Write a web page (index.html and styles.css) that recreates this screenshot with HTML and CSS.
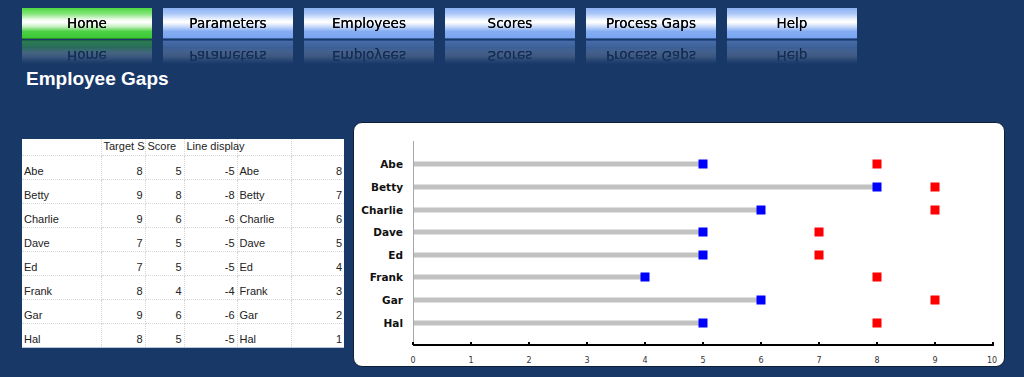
FILE: index.html
```html
<!DOCTYPE html>
<html lang="en">
<head>
<meta charset="UTF-8">
<title>Employee Gaps</title>
<link rel="stylesheet" href="styles.css">
</head>
<body>
<div class="page">

<!-- Top navigation -->
<nav class="nav">
    <a class="nav-btn active" href="#">Home</a>
    <a class="nav-btn" href="#">Parameters</a>
    <a class="nav-btn" href="#">Employees</a>
    <a class="nav-btn" href="#">Scores</a>
    <a class="nav-btn" href="#">Process Gaps</a>
    <a class="nav-btn" href="#">Help</a>
</nav>

<h1 class="title">Employee Gaps</h1>

<div class="content">
    <!-- Data sheet -->
    <table class="sheet">
        <colgroup>
            <col class="c1"><col class="c2"><col class="c3"><col class="c4"><col class="c5"><col class="c6">
        </colgroup>
        <tr class="head">
            <td></td><td class="clip">Target Score</td><td>Score</td><td class="spill">Line display</td><td></td><td></td>
        </tr>
        <tr><td>Abe</td><td class="num">8</td><td class="num">5</td><td class="num">-5</td><td>Abe</td><td class="num">8</td></tr>
        <tr><td>Betty</td><td class="num">9</td><td class="num">8</td><td class="num">-8</td><td>Betty</td><td class="num">7</td></tr>
        <tr><td>Charlie</td><td class="num">9</td><td class="num">6</td><td class="num">-6</td><td>Charlie</td><td class="num">6</td></tr>
        <tr><td>Dave</td><td class="num">7</td><td class="num">5</td><td class="num">-5</td><td>Dave</td><td class="num">5</td></tr>
        <tr><td>Ed</td><td class="num">7</td><td class="num">5</td><td class="num">-5</td><td>Ed</td><td class="num">4</td></tr>
        <tr><td>Frank</td><td class="num">8</td><td class="num">4</td><td class="num">-4</td><td>Frank</td><td class="num">3</td></tr>
        <tr><td>Gar</td><td class="num">9</td><td class="num">6</td><td class="num">-6</td><td>Gar</td><td class="num">2</td></tr>
        <tr><td>Hal</td><td class="num">8</td><td class="num">5</td><td class="num">-5</td><td>Hal</td><td class="num">1</td></tr>
    </table>

    <!-- Gap chart -->
    <div class="chart">
        <svg width="650" height="243" viewBox="0 0 650 243">
            <line x1="59.5" y1="18" x2="59.5" y2="222" stroke="#a8a8a8" stroke-width="1"/>

            <g class="labels">
                <text x="49" y="45">Abe</text>
                <text x="49" y="68">Betty</text>
                <text x="49" y="91">Charlie</text>
                <text x="49" y="113">Dave</text>
                <text x="49" y="136">Ed</text>
                <text x="49" y="158">Frank</text>
                <text x="49" y="181">Gar</text>
                <text x="49" y="204">Hal</text>
            </g>

            <g fill="#c2c2c2">
                <rect x="60" y="38.5" width="289" height="5"/>
                <rect x="60" y="61.5" width="463" height="5"/>
                <rect x="60" y="84.5" width="347" height="5"/>
                <rect x="60" y="106.5" width="289" height="5"/>
                <rect x="60" y="129.5" width="289" height="5"/>
                <rect x="60" y="151.5" width="231" height="5"/>
                <rect x="60" y="174.5" width="347" height="5"/>
                <rect x="60" y="197.5" width="289" height="5"/>
            </g>

            <!-- score markers -->
            <g fill="#0000ff">
                <rect x="344.5" y="36.5" width="9" height="9"/>
                <rect x="518.5" y="59.5" width="9" height="9"/>
                <rect x="402.5" y="82.5" width="9" height="9"/>
                <rect x="344.5" y="104.5" width="9" height="9"/>
                <rect x="344.5" y="127.5" width="9" height="9"/>
                <rect x="286.5" y="149.5" width="9" height="9"/>
                <rect x="402.5" y="172.5" width="9" height="9"/>
                <rect x="344.5" y="195.5" width="9" height="9"/>
            </g>

            <!-- target markers -->
            <g fill="#ff0000">
                <rect x="518.5" y="36.5" width="9" height="9"/>
                <rect x="576.5" y="59.5" width="9" height="9"/>
                <rect x="576.5" y="82.5" width="9" height="9"/>
                <rect x="460.5" y="104.5" width="9" height="9"/>
                <rect x="460.5" y="127.5" width="9" height="9"/>
                <rect x="518.5" y="149.5" width="9" height="9"/>
                <rect x="576.5" y="172.5" width="9" height="9"/>
                <rect x="518.5" y="195.5" width="9" height="9"/>
            </g>

            <line x1="59" y1="222" x2="640" y2="222" stroke="#000" stroke-width="2"/>
            <g fill="#000">
                <rect x="58" y="219" width="2" height="3"/>
                <rect x="116" y="219" width="2" height="3"/>
                <rect x="174" y="219" width="2" height="3"/>
                <rect x="232" y="219" width="2" height="3"/>
                <rect x="290" y="219" width="2" height="3"/>
                <rect x="348" y="219" width="2" height="3"/>
                <rect x="406" y="219" width="2" height="3"/>
                <rect x="464" y="219" width="2" height="3"/>
                <rect x="522" y="219" width="2" height="3"/>
                <rect x="580" y="219" width="2" height="3"/>
                <rect x="638" y="219" width="2" height="3"/>
            </g>

            <g class="ticks">
                <text x="59" y="240">0</text>
                <text x="117" y="240">1</text>
                <text x="175" y="240">2</text>
                <text x="233" y="240">3</text>
                <text x="291" y="240">4</text>
                <text x="349" y="240">5</text>
                <text x="407" y="240">6</text>
                <text x="465" y="240">7</text>
                <text x="523" y="240">8</text>
                <text x="581" y="240">9</text>
                <text x="638" y="240">10</text>
            </g>
        </svg>
    </div>
</div>

</div>
</body>
</html>
```

FILE: styles.css
```css
body {
    margin: 0;
    background-color: #183868;
    font-family: "Liberation Sans", Arial, sans-serif;
}
.page {
    padding: 8px 0 0 22px;
}
.nav {
    display: flex;
    gap: 11px;
}
.nav-btn {
    width: 130px;
    height: 30px;
    display: flex;
    align-items: center;
    justify-content: center;
    font-family: "DejaVu Sans", Verdana, sans-serif;
    font-size: 13.5px;
    color: #000;
    text-decoration: none;
    text-shadow: 0 0 0.4px #000;
    background: linear-gradient(#8db2f3 0%, #a9c6f7 18%, #f4f8ff 40%, #ffffff 48%, #c8dafa 62%, #84acf2 78%, #79a5f0 100%);
    border-bottom: 1px solid #3d62a4;
    -webkit-box-reflect: below 1px linear-gradient(transparent 22%, rgba(255, 255, 255, 0.5));
}
.nav-btn.active {
    background: linear-gradient(#4fd843 0%, #7ee473 18%, #f2fcf0 40%, #ffffff 48%, #c6f0bf 62%, #4cd044 78%, #3bc736 100%);
    border-bottom-color: #2b8a2a;
}
.title {
    margin: 29px 0 0 4px;
    font-size: 19px;
    line-height: 22px;
    font-weight: bold;
    color: #fff;
}
.content {
    display: flex;
    align-items: flex-start;
    gap: 9px;
    margin-top: 32px;
}
.sheet {
    margin-top: 17px;
    width: 322px;
    table-layout: fixed;
    border-collapse: collapse;
    background: #fff;
    font-size: 11px;
    color: #222;
    border-bottom: 1px solid #b9c5d9;
}
.sheet col.c1 { width: 79px; }
.sheet col.c2 { width: 44px; }
.sheet col.c3 { width: 39px; }
.sheet col.c4 { width: 53px; }
.sheet col.c5 { width: 54px; }
.sheet col.c6 { width: 53px; }
.sheet td {
    height: 22px;
    padding: 0 2px 1px 2px;
    vertical-align: bottom;
    white-space: nowrap;
    border: 1px dotted #d6d6d6;
    line-height: 13px;
}
.sheet tr:first-child td {
    border-top: none;
}
.sheet td:first-child {
    border-left: none;
}
.sheet td:last-child {
    border-right: none;
}
.sheet tr.head td {
    height: 15px;
    vertical-align: middle;
}
.sheet td.clip {
    overflow: hidden;
}
.sheet td.spill {
    overflow: visible;
}
.sheet td.num {
    text-align: right;
}
.chart {
    width: 650px;
    height: 243px;
    background: #fff;
    border-radius: 9px;
    border: 1px solid #0e1e36;
    overflow: hidden;
}
.chart svg {
    display: block;
}
.labels text {
    font-family: "DejaVu Sans", Verdana, sans-serif;
    font-size: 10.5px;
    font-weight: bold;
    text-anchor: end;
    fill: #111;
}
.ticks text {
    font-family: "DejaVu Sans", Verdana, sans-serif;
    font-size: 8px;
    text-anchor: middle;
    fill: #333;
}
```
